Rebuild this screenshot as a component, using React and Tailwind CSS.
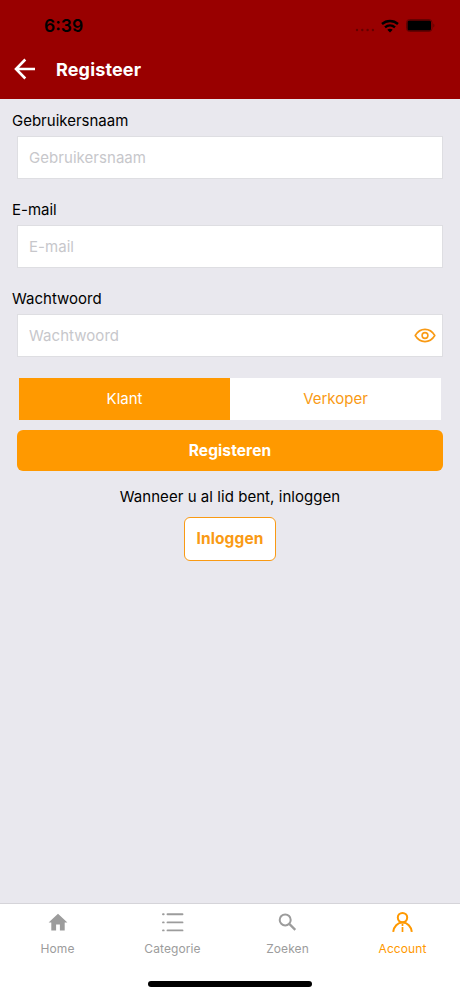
const FIELDS = [
  { label: 'Gebruikersnaam', type: 'text' },
  { label: 'E-mail', type: 'email' },
  { label: 'Wachtwoord', type: 'password' },
];

const EyeIcon = () => (
  <svg className="w-[22px] h-[16px]" viewBox="0 0 22 16" fill="none" stroke="#f99a14" strokeWidth="1.600">
    <path d="M1.200 7.500C3.600 3.500 7 1.400 11 1.400S18.400 3.500 20.800 7.500C18.400 11.500 15 13.600 11 13.600S3.600 11.500 1.200 7.500Z" strokeLinejoin="round" />
    <circle cx="11" cy="7.500" r="2.900" />
  </svg>
);

const HomeIcon = () => (
  <svg className="w-6 h-6" viewBox="0 0 24 24" fill="currentColor">
    <path d="M12 3.700 2.600 12.500H5.300V20.400H10.100V14.400H13.900V20.400H18.700V12.500H21.400Z" />
  </svg>
);

const ListIcon = () => (
  <svg className="w-6 h-6" viewBox="0 0 24 24" fill="none" stroke="currentColor" strokeWidth="1.900" strokeLinecap="round">
    <path d="M6.500 4.300H21.500M6.500 12.400H21.500M6.500 20.400H21.500M2 4.300H2.700M2 12.400H2.700M2 20.400H2.700" />
  </svg>
);

const SearchIcon = () => (
  <svg className="w-6 h-6" viewBox="0 0 24 24" fill="none" stroke="currentColor" strokeWidth="2">
    <circle cx="9.200" cy="9.900" r="5.500" />
    <path d="M13 13.600 19.300 19.900" strokeWidth="2.200" />
  </svg>
);

const AccountIcon = () => (
  <svg className="w-6 h-6" viewBox="0 0 24 24" fill="none" stroke="currentColor" strokeWidth="2">
    <circle cx="11.500" cy="7.600" r="4.700" />
    <path d="M2.200 21.900C2.700 16.500 6.600 12.500 11.500 12.500S20.300 16.500 20.800 21.900" />
    <path d="M11.500 13.800V16M11.500 17V21.900" strokeWidth="1.700" />
  </svg>
);

const TABS = [
  { label: 'Home', Icon: HomeIcon },
  { label: 'Categorie', Icon: ListIcon },
  { label: 'Zoeken', Icon: SearchIcon },
  { label: 'Account', Icon: AccountIcon, active: true },
];

function StatusBar() {
  return (
    <div className="flex h-[49px] items-center justify-between pt-[2px] pl-[44px] pr-[24px] text-black">
      <span className="text-[17.5px] font-semibold leading-none">6:39</span>
      <div className="flex items-center">
        <svg className="mt-[9px] mr-[6px] w-5 h-1" viewBox="0 0 20 4" fill="#650000">
          <circle cx="2" cy="2" r="1.200" />
          <circle cx="7.300" cy="2" r="1.200" />
          <circle cx="12.600" cy="2" r="1.200" />
          <circle cx="17.900" cy="2" r="1.200" />
        </svg>
        <svg className="w-[18px] h-[14px]" viewBox="0 0 18 14" fill="none" stroke="currentColor" strokeWidth="2.400">
          <path d="M1 5C5.500.900 12.500.900 17 5" />
          <path d="M4 8.400C6.900 5.900 11.100 5.900 14 8.400" />
          <path d="M9 13.500 6.300 10.700C7.800 9.500 10.200 9.500 11.700 10.700Z" fill="currentColor" stroke="none" />
        </svg>
        <svg className="ml-[7px] w-[30px] h-[13px]" viewBox="0 0 30 13">
          <rect x=".5" y=".5" width="25.500" height="12" rx="3" fill="none" stroke="#650000" />
          <rect x="1.500" y="1.500" width="23.500" height="10" rx="1.500" fill="#000" />
          <path d="M27.300 4.500C28.800 5 28.800 8 27.300 8.500Z" fill="#650000" />
        </svg>
      </div>
    </div>
  );
}

function Field({ label, type }) {
  return (
    <div className="h-[89px]">
      <label className="block pl-3 text-[15px] leading-[21px]">{label}</label>
      <div className="mx-[17px] mt-[5px] flex h-[43px] items-center border border-[#dedee2] bg-white pl-[11px] pr-[6px]">
        <input
          type={type}
          placeholder={label}
          className="min-w-0 flex-1 bg-transparent pt-[2px] text-[15px] tracking-[0.05px] outline-none placeholder:text-[#c7c7cb]"
        />
        {type === 'password' && <EyeIcon />}
      </div>
    </div>
  );
}

export default function App() {
  return (
    <div className="flex h-[996px] w-[460px] flex-col overflow-hidden bg-[#e9e8ee] font-['Inter',sans-serif] text-black">
      <header className="h-[99px] bg-[#990000]">
        <StatusBar />
        <div className="flex h-10 items-center pl-[14px] text-white">
          <svg className="w-[22px] h-[22px]" viewBox="0 0 22 22" fill="none" stroke="currentColor" strokeWidth="2.600">
            <path d="M11.300 1.500 2 11 11.300 20.500M2 11H21" />
          </svg>
          <h1 className="ml-5 text-[18px] font-bold tracking-[0.15px]">Registeer</h1>
        </div>
      </header>

      <main className="flex-1 pt-[11px]">
        {FIELDS.map((f) => (
          <Field key={f.label} {...f} />
        ))}

        <div className="mx-[19px] mt-[1px] flex h-[42px] text-[15px]">
          <button className="flex-1 bg-[#ff9900] text-white">Klant</button>
          <button className="flex-1 bg-white text-[#f99a14]">Verkoper</button>
        </div>
        <button className="mx-[17px] mt-[10px] block h-[41px] w-[426px] rounded-[6px] bg-[#ff9900] text-[15.5px] font-bold tracking-[0.1px] text-white">
          Registeren
        </button>

        <p className="mt-[15px] text-center text-[15px] leading-[21px] tracking-[0.05px]">Wanneer u al lid bent, inloggen</p>
        <button className="mx-auto mt-[10px] block h-[44px] w-[92px] rounded-[6px] border border-[#f99a14] bg-white text-[15.5px] font-bold tracking-[0.1px] text-[#f99a14]">
          Inloggen
        </button>
      </main>

      <nav className="flex h-[93px] flex-col border-t border-[#d5d4d9] bg-white">
        <div className="grid grid-cols-4 pt-[6px]">
          {TABS.map(({ label, Icon, active }) => (
            <a key={label} className={active ? 'flex flex-col items-center text-[#ff9900]' : 'flex flex-col items-center text-[#9c9c9c]'}>
              <Icon />
              <span className="mt-[7px] text-[12px] leading-4 tracking-[0.1px]">{label}</span>
            </a>
          ))}
        </div>
        <div className="mx-auto mt-auto mb-[9px] h-[6px] w-[164px] rounded-full bg-black" />
      </nav>
    </div>
  );
}
